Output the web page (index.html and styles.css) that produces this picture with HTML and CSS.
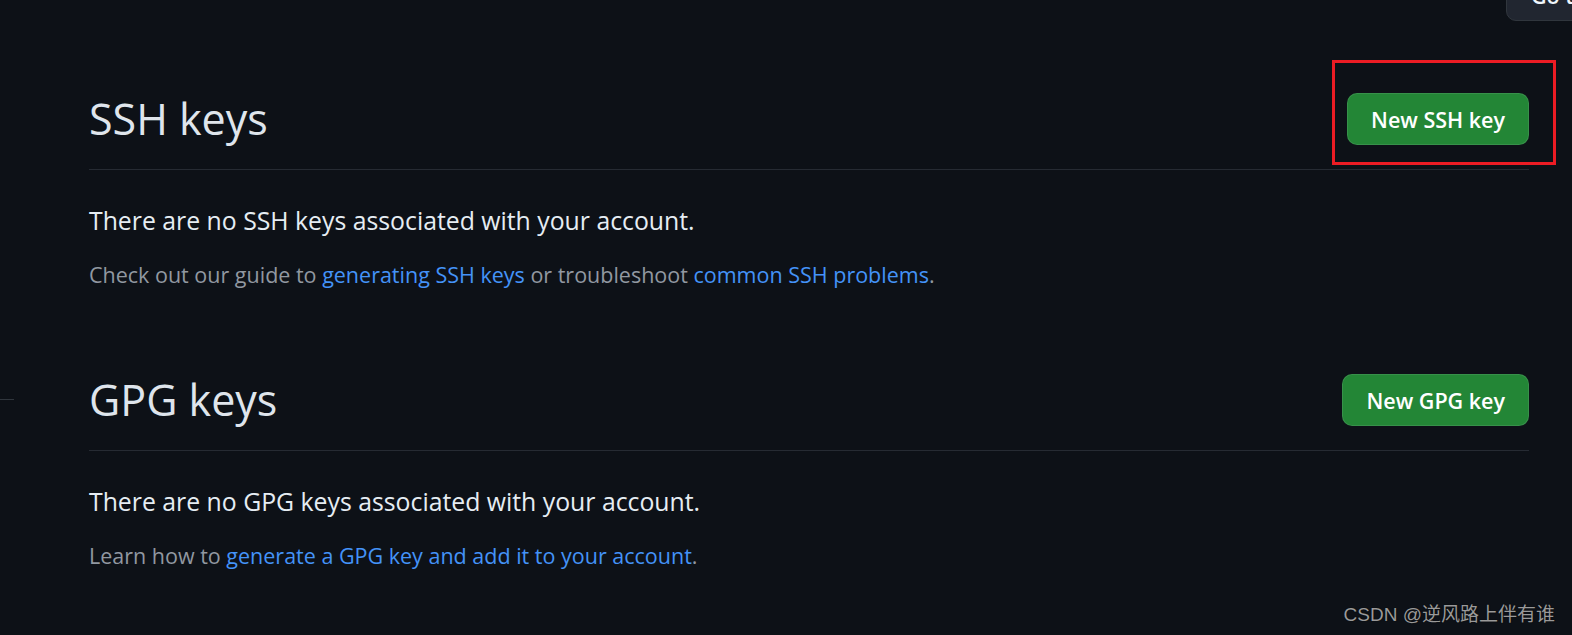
FILE: index.html
```html
<!DOCTYPE html>
<html lang="en">
<head>
<meta charset="utf-8">
<title>SSH and GPG keys</title>
<link rel="stylesheet" href="styles.css">
</head>
<body>
  <div class="topbar">
    <a class="btn btn-profile" href="#">Go to your personal profile</a>
  </div>
  <div class="page">
    <div class="sidebar"><div class="sidebar-rule"></div></div>
    <main class="content">
      <section class="keys-section">
        <div class="subhead">
          <h2 class="subhead-heading">SSH keys</h2>
          <div class="btn-wrap">
            <a class="btn btn-primary" href="#">New SSH key</a>
            <span class="annot"></span>
          </div>
        </div>
        <p class="lead">There are no SSH keys associated with your account.</p>
        <p class="note">Check out our guide to <a href="#">generating SSH keys</a> or troubleshoot <a href="#">common SSH problems</a>.</p>
      </section>
      <section class="keys-section">
        <div class="subhead">
          <h2 class="subhead-heading">GPG keys</h2>
          <div class="btn-wrap">
            <a class="btn btn-primary" href="#">New GPG key</a>
          </div>
        </div>
        <p class="lead">There are no GPG keys associated with your account.</p>
        <p class="note">Learn how to <a href="#">generate a GPG key and add it to your account</a>.</p>
      </section>
    </main>
  </div>
  <div class="watermark">CSDN @逆风路上伴有谁</div>
</body>
</html>
```
FILE: styles.css
```css
html, body {
  margin: 0;
  padding: 0;
  background: #0d1117;
  overflow: hidden;
}
body {
  width: 1572px;
  height: 635px;
  position: relative;
  font-family: "Open Sans", "Noto Sans", "Liberation Sans", sans-serif;
  color: #e6edf3;
}
a { text-decoration: none; }

.topbar {
  display: flex;
  height: 21px;
  padding-left: 1506px;
}
.btn {
  display: inline-flex;
  align-items: center;
  box-sizing: border-box;
  height: 52px;
  padding: 0 23px;
  border-radius: 10px;
  font-size: 21.5px;
  font-weight: 600;
  white-space: nowrap;
  flex-shrink: 0;
}
.btn-profile {
  margin-top: -31px;
  padding: 0 24px;
  background: #212630;
  border: 1px solid #30363d;
  color: #f0f6fc;
}

.page {
  display: flex;
}
.sidebar {
  width: 14px;
  flex-shrink: 0;
}
.sidebar-rule {
  margin-top: 378px;
  height: 1px;
  background: #30363d;
}
.content {
  margin-left: 75px;
  width: 1440px;
}
.keys-section {
  margin-bottom: 83px;
}
.keys-section:first-child {
  margin-top: 72px;
}
.subhead {
  display: flex;
  align-items: center;
  justify-content: space-between;
  padding-bottom: 24px;
  border-bottom: 1px solid #262b33;
}
.subhead-heading {
  margin: 0;
  font-size: 43px;
  font-weight: 400;
  line-height: 52px;
  color: #dfe5ec;
}
.btn-wrap {
  position: relative;
  display: flex;
}
.btn-primary {
  background: #238636;
  border: 1px solid rgba(240, 246, 252, 0.1);
  color: #ffffff;
}
.annot {
  position: absolute;
  left: -15px;
  top: -33px;
  width: 224px;
  height: 105px;
  box-sizing: border-box;
  border: 3px solid #ec1c24;
  pointer-events: none;
}
.lead {
  margin: 32px 0 0;
  font-size: 24.8px;
  line-height: 36px;
  color: #e6edf3;
}
.note {
  margin: 21px 0 0;
  font-size: 21.5px;
  line-height: 32px;
  color: #9198a1;
}
.note a {
  color: #4493f8;
}
.watermark {
  position: absolute;
  right: 17px;
  bottom: 7px;
  font-family: "Liberation Sans", "Noto Sans CJK SC", sans-serif;
  font-size: 19px;
  line-height: 26px;
  color: #9a9a9a;
  text-shadow: 0 0 1px #000;
}
```
